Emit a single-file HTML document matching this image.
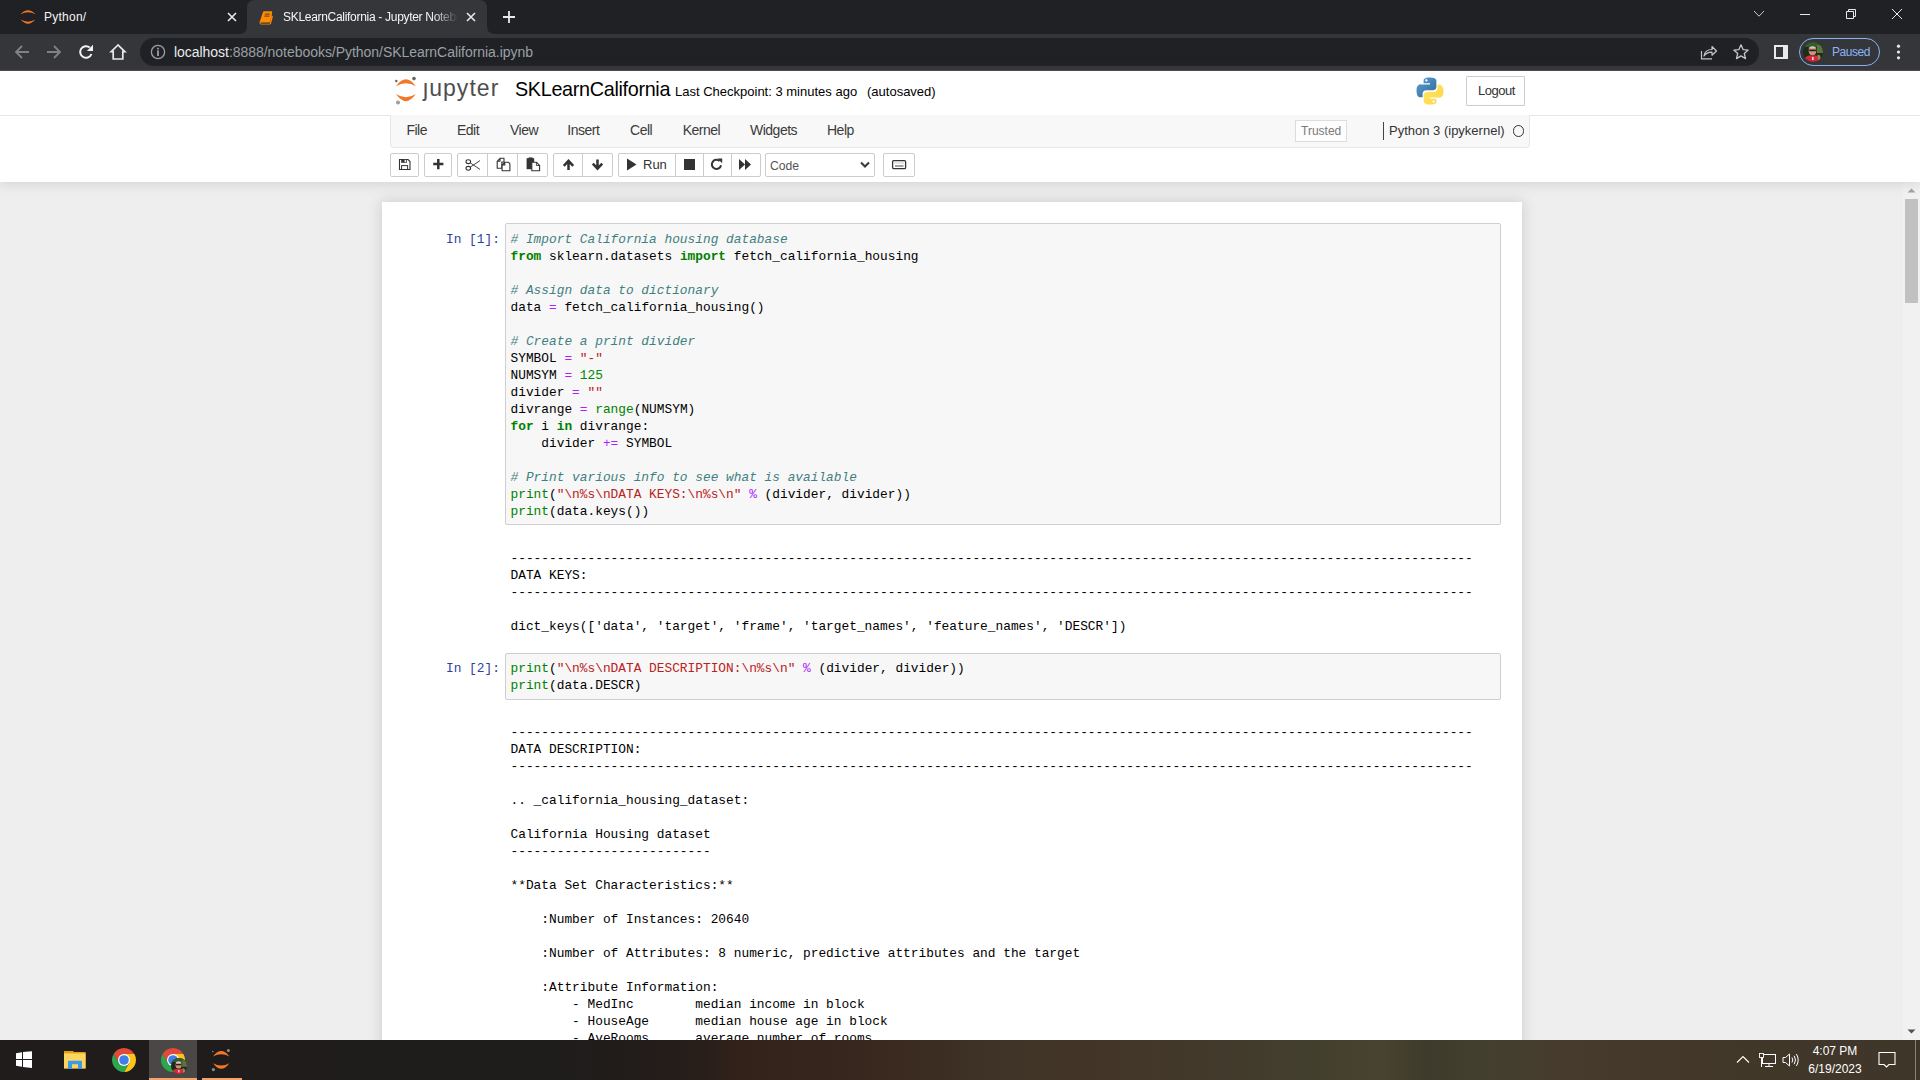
<!DOCTYPE html><html><head><meta charset="utf-8"><title>SKLearnCalifornia - Jupyter Notebook</title><style>
*{box-sizing:border-box}
html,body{margin:0;padding:0;width:1920px;height:1080px;overflow:hidden;position:relative;font-family:"Liberation Sans",sans-serif;background:#fff}
.a{position:absolute;margin:0}
div.a{white-space:nowrap}
.btn{background:#fff;border:1px solid #ccc;border-radius:2px}
pre.mono{font-family:"Liberation Mono",monospace;font-size:12.83px;line-height:17px;color:#000;z-index:2;margin:0;padding:0;white-space:pre}
pre.prompt{color:#303f9f}
.k{color:#008000;font-weight:bold}
.o{color:#aa22ff}
.c{color:#408080;font-style:italic}
.s{color:#ba2121}
.n{color:#080}
.b{color:#008000}
</style></head><body>
<div class="a" style="left:0;top:0;width:1920px;height:34px;background:#202124"></div>
<svg class="a" style="left:239px;top:0" width="256" height="34" viewBox="0 0 256 34">
<path d="M0 34 Q8 34 8 26 L8 8 Q8 0 16 0 L240 0 Q248 0 248 8 L248 26 Q248 34 256 34 Z" fill="#35363a"/></svg>
<svg class="a" style="left:19px;top:8px" width="18" height="18" viewBox="0 0 18 18">
<path d="M1.5 6.3 Q9 -2 16.5 6.3 Q9 2.2 1.5 6.3 Z" fill="#f37726"/>
<path d="M1.5 11.6 Q9 19.9 16.5 11.6 Q9 15.7 1.5 11.6 Z" fill="#f37726"/></svg>
<div class="a" style="left:44px;top:9.5px;color:#f4f5f6;font-size:12px;letter-spacing:0.25px">Python/</div>
<svg class="a" style="left:226px;top:11px" width="12" height="12" viewBox="0 0 12 12"><path d="M2 2 L10 10 M10 2 L2 10" stroke="#e8eaed" stroke-width="1.6"/></svg>
<svg class="a" style="left:259px;top:10.5px" width="15" height="14" viewBox="0 0 15 14">
<path d="M4 1 Q4.3 0.3 5.2 0.3 L12.6 0.3 Q13.4 0.3 13.2 1.2 L11.3 10.6 Q11.1 11.4 10.3 11.4 L2.2 11.4 Q1.2 11.4 1.4 12.2 Q1.6 12.7 2.4 12.7 L10.6 12.7 L11.6 10 L12.6 4.6 Q14.2 4.8 13.8 6.2 L12 12.6 Q11.6 13.6 10.6 13.6 L2.3 13.6 Q0.2 13.6 0.5 11.6 Z" fill="#ff8c00"/>
<path d="M5.8 3.1 H10.8 M5.4 5.1 H10.4" stroke="#35363a" stroke-width="0.9"/></svg>
<div class="a" style="left:283px;top:9.5px;width:175px;height:18px;overflow:hidden;color:#f4f5f6;font-size:12px;letter-spacing:-0.3px;white-space:nowrap;-webkit-mask-image:linear-gradient(90deg,#000 150px,transparent 175px)">SKLearnCalifornia - Jupyter Notebook</div>
<svg class="a" style="left:465px;top:11px" width="12" height="12" viewBox="0 0 12 12"><path d="M2 2 L10 10 M10 2 L2 10" stroke="#e8eaed" stroke-width="1.6"/></svg>
<svg class="a" style="left:502px;top:10px" width="14" height="14" viewBox="0 0 14 14"><path d="M7 1 V13 M1 7 H13" stroke="#e8eaed" stroke-width="1.8"/></svg>
<svg class="a" style="left:1753px;top:10px" width="12" height="8" viewBox="0 0 12 8"><path d="M1 1 L6 6.2 L11 1" stroke="#c9cacc" stroke-width="1" fill="none"/></svg>
<div class="a" style="left:1800px;top:14px;width:10px;height:1px;background:#e8eaed"></div>
<svg class="a" style="left:1845px;top:8px" width="12" height="12" viewBox="0 0 12 12"><path d="M1.5 3.5 H8.5 V10.5 H1.5 Z M3.5 3.5 V1.5 H10.5 V8.5 H8.5" stroke="#e8eaed" stroke-width="1" fill="none"/></svg>
<svg class="a" style="left:1891px;top:8px" width="12" height="12" viewBox="0 0 12 12"><path d="M1 1 L11 11 M11 1 L1 11" stroke="#e8eaed" stroke-width="1"/></svg>
<div class="a" style="left:0;top:34px;width:1920px;height:37px;background:#35363a"></div><div class="a" style="left:0;top:70px;width:1920px;height:1px;background:#4a4b4e"></div>
<svg class="a" style="left:13px;top:44px" width="18" height="16" viewBox="0 0 18 16"><path d="M16 8 H3 M9 2 L3 8 L9 14" stroke="#7f8184" stroke-width="1.8" fill="none"/></svg>
<svg class="a" style="left:45px;top:44px" width="18" height="16" viewBox="0 0 18 16"><path d="M2 8 H15 M9 2 L15 8 L9 14" stroke="#7f8184" stroke-width="1.8" fill="none"/></svg>
<svg class="a" style="left:77px;top:43px" width="18" height="18" viewBox="0 0 18 18"><path d="M14.45 10.98 A5.8 5.8 0 1 1 12.73 4.56" stroke="#f1f3f4" stroke-width="2" fill="none"/><path d="M16 1.8 L16 7.9 L9.9 7.9 Z" fill="#f1f3f4"/></svg>
<svg class="a" style="left:109px;top:43px" width="18" height="18" viewBox="0 0 18 18"><path d="M9 2 L2.2 8.6 H4.2 V16 H13.8 V8.6 H15.8 Z" stroke="#e8eaed" stroke-width="1.7" fill="none" stroke-linejoin="miter"/></svg>
<div class="a" style="left:140px;top:38px;width:1619px;height:28px;border-radius:14px;background:#202124"></div>
<svg class="a" style="left:150px;top:44px" width="16" height="16" viewBox="0 0 16 16"><circle cx="8" cy="8" r="6.6" stroke="#9aa0a6" stroke-width="1.3" fill="none"/><rect x="7.1" y="3.8" width="1.8" height="1.6" fill="#9aa0a6"/><rect x="7.1" y="6.4" width="1.8" height="5.6" fill="#9aa0a6"/></svg>
<div class="a" style="left:174px;top:44px;font-size:14px;letter-spacing:-0.04px;white-space:nowrap;color:#9aa0a6"><span style="color:#e8eaed">localhost</span>:8888/notebooks/Python/SKLearnCalifornia.ipynb</div>
<svg class="a" style="left:1700px;top:44px" width="18" height="16" viewBox="0 0 18 16"><path d="M1.5 7 V14.8 H12" stroke="#c4c7c5" stroke-width="1.2" fill="none"/><path d="M4 12 Q5 5.5 12 5.5 V2.5 L16.5 7 L12 11.2 V8.2 Q7 8 4 12 Z" stroke="#c4c7c5" stroke-width="1.2" fill="none" stroke-linejoin="round"/></svg>
<svg class="a" style="left:1732px;top:43px" width="18" height="18" viewBox="0 0 18 18"><path d="M9 1.8 L11.1 6.6 L16.2 7.1 L12.3 10.5 L13.5 15.6 L9 12.9 L4.5 15.6 L5.7 10.5 L1.8 7.1 L6.9 6.6 Z" stroke="#c4c7c5" stroke-width="1.3" fill="none" stroke-linejoin="round"/></svg>
<div class="a" style="left:1774px;top:45px;width:14px;height:14px;background:#e8eaed"></div><div class="a" style="left:1776px;top:47px;width:7px;height:10px;background:#35363a"></div>
<div class="a" style="left:1799px;top:38px;width:81px;height:28px;border-radius:14px;border:1px solid #8ab4f8;background:#35363a"></div>
<svg class="a" style="left:1803px;top:42px" width="20" height="20" viewBox="0 0 20 20">
<defs><clipPath id="cp1803"><circle cx="10" cy="10" r="10"/></clipPath></defs>
<g clip-path="url(#cp1803)"><rect width="20" height="20" fill="#1f2b19"/><rect x="0" y="0" width="20" height="5" fill="#3b5a2a"/><rect x="14" y="3" width="6" height="8" fill="#58773c"/>
<ellipse cx="9.5" cy="8.8" rx="3.8" ry="4.4" fill="#c8967a"/><path d="M5.3 6.2 Q9.5 2.5 13.7 6.2 Z" fill="#c9c9c9"/>
<rect x="6.3" y="7.6" width="6.6" height="1.6" fill="#1a1a1a"/>
<path d="M0.5 20 Q1.5 12.6 9.5 13.4 Q17.5 12.6 19.5 20 Z" fill="#d42a3a"/><path d="M14.5 12.6 L17.2 13.6 L18 20 L15.2 20 Z" fill="#9c8758"/><rect x="9" y="15" width="1.6" height="3" fill="#f0e0e0"/></g></svg>
<div class="a" style="left:1832px;top:45px;font-size:12px;letter-spacing:-0.45px;color:#8ab4f8;white-space:nowrap">Paused</div>
<svg class="a" style="left:1895px;top:44px" width="7" height="16" viewBox="0 0 7 16"><circle cx="3.5" cy="2.2" r="1.6" fill="#e8eaed"/><circle cx="3.5" cy="8" r="1.6" fill="#e8eaed"/><circle cx="3.5" cy="13.8" r="1.6" fill="#e8eaed"/></svg>
<div class="a" style="left:0;top:71px;width:1920px;height:111px;background:#fff;box-shadow:0 0 12px 1px rgba(87,87,87,0.2);z-index:2"></div>
<svg class="a" style="left:390px;top:72px;z-index:3;" width="32" height="36" viewBox="0 0 32 36">
<path d="M6 14.2 Q15.9 0.4 25.8 14.2 Q15.9 8.2 6 14.2 Z" fill="#f37726"/>
<path d="M6 22.1 Q15.9 36.4 25.8 22.1 Q15.9 28.6 6 22.1 Z" fill="#f37726"/>
<circle cx="24" cy="6.6" r="1.8" fill="#616262"/><circle cx="6.3" cy="9" r="1.2" fill="#616262"/><circle cx="8" cy="30.5" r="2" fill="#9e9e9e"/></svg>
<div class="a" style="left:423px;top:74.5px;font-size:23px;letter-spacing:1.05px;color:#4e4e4e;z-index:3;">ȷupyter</div>
<div class="a" style="left:515px;top:77.5px;font-size:19.8px;letter-spacing:-0.32px;color:#000;white-space:nowrap;z-index:3;">SKLearnCalifornia</div>
<div class="a" style="left:675px;top:84px;font-size:13px;color:#000;white-space:nowrap;z-index:3;">Last Checkpoint: 3 minutes ago</div>
<div class="a" style="left:867px;top:84px;font-size:13px;color:#000;white-space:nowrap;z-index:3;">(autosaved)</div>
<svg class="a" style="left:1416px;top:77px;z-index:3;" width="28" height="28" viewBox="0 0 110 110">
<defs><linearGradient id="pyb" x1="0" y1="0" x2="1" y2="1"><stop offset="0" stop-color="#5a9fd4"/><stop offset="1" stop-color="#306998"/></linearGradient>
<linearGradient id="pyy" x1="0" y1="0" x2="1" y2="1"><stop offset="0" stop-color="#ffe873"/><stop offset="1" stop-color="#ffd43b"/></linearGradient></defs>
<path d="M54 2 C28 2 30 13 30 13 L30 25 L55 25 L55 29 L19 29 C19 29 2 27 2 54 C2 81 17 80 17 80 L26 80 L26 67 C26 67 25 52 41 52 L66 52 C66 52 80 52 80 38 L80 15 C80 15 82 2 54 2 Z M41 9 C43.5 9 45.5 11 45.5 13.5 C45.5 16 43.5 18 41 18 C38.5 18 36.5 16 36.5 13.5 C36.5 11 38.5 9 41 9 Z" fill="url(#pyb)"/>
<path d="M56 108 C82 108 80 97 80 97 L80 85 L55 85 L55 81 L91 81 C91 81 108 83 108 56 C108 29 93 30 93 30 L84 30 L84 43 C84 43 85 58 69 58 L44 58 C44 58 30 58 30 72 L30 95 C30 95 28 108 56 108 Z M69 101 C66.5 101 64.5 99 64.5 96.5 C64.5 94 66.5 92 69 92 C71.5 92 73.5 94 73.5 96.5 C73.5 99 71.5 101 69 101 Z" fill="url(#pyy)"/></svg>
<div class="a btn" style="left:1466px;top:76px;width:59px;height:30px;border-radius:1px;z-index:3;"></div>
<div class="a" style="left:1478px;top:83px;font-size:13px;letter-spacing:-0.5px;color:#333;z-index:3;">Logout</div>
<div class="a" style="left:0;top:115px;width:1920px;height:1px;background:#e7e7e7;z-index:3;"></div>
<div class="a" style="left:390px;top:115px;width:1140px;height:33px;background:#f8f8f8;border:1px solid #e7e7e7;border-top:none;border-radius:0 0 4px 4px;z-index:3;"></div>
<div class="a" style="left:406.4px;top:122px;font-size:14px;letter-spacing:-0.5px;color:#3b3b3b;z-index:3;">File</div>
<div class="a" style="left:457px;top:122px;font-size:14px;letter-spacing:-0.5px;color:#3b3b3b;z-index:3;">Edit</div>
<div class="a" style="left:510px;top:122px;font-size:14px;letter-spacing:-0.5px;color:#3b3b3b;z-index:3;">View</div>
<div class="a" style="left:567.3px;top:122px;font-size:14px;letter-spacing:-0.5px;color:#3b3b3b;z-index:3;">Insert</div>
<div class="a" style="left:630.1px;top:122px;font-size:14px;letter-spacing:-0.5px;color:#3b3b3b;z-index:3;">Cell</div>
<div class="a" style="left:682.7px;top:122px;font-size:14px;letter-spacing:-0.5px;color:#3b3b3b;z-index:3;">Kernel</div>
<div class="a" style="left:750px;top:122px;font-size:14px;letter-spacing:-0.5px;color:#3b3b3b;z-index:3;">Widgets</div>
<div class="a" style="left:827px;top:122px;font-size:14px;letter-spacing:-0.5px;color:#3b3b3b;z-index:3;">Help</div>
<div class="a" style="left:1295px;top:120px;width:52px;height:22px;border:1px solid #ddd;border-radius:0;background:#fdfdfd;z-index:3;"></div>
<div class="a" style="left:1301px;top:124px;font-size:12px;color:#7a7a7a;z-index:3;">Trusted</div>
<div class="a" style="left:1383px;top:122px;width:1px;height:18px;background:#444;z-index:3;"></div>
<div class="a" style="left:1389px;top:123px;font-size:13px;color:#333;white-space:nowrap;z-index:3;">Python 3 (ipykernel)</div>
<div class="a" style="left:1512.5px;top:125px;width:11.5px;height:11.5px;border:1.9px solid #333;border-radius:50%;z-index:3;"></div>
<div class="a btn" style="left:390px;top:153px;width:29px;height:24px;z-index:3;"></div>
<div class="a btn" style="left:424px;top:153px;width:28px;height:24px;z-index:3;"></div>
<div class="a btn" style="left:457px;top:153px;width:91px;height:24px;z-index:3;"></div>
<div class="a" style="left:487px;top:153px;width:1px;height:24px;background:#ccc;z-index:3;"></div>
<div class="a" style="left:517px;top:153px;width:1px;height:24px;background:#ccc;z-index:3;"></div>
<div class="a btn" style="left:553px;top:153px;width:60px;height:24px;z-index:3;"></div>
<div class="a" style="left:582px;top:153px;width:1px;height:24px;background:#ccc;z-index:3;"></div>
<div class="a btn" style="left:618px;top:153px;width:143px;height:24px;z-index:3;"></div>
<div class="a" style="left:675px;top:153px;width:1px;height:24px;background:#ccc;z-index:3;"></div>
<div class="a" style="left:703px;top:153px;width:1px;height:24px;background:#ccc;z-index:3;"></div>
<div class="a" style="left:731px;top:153px;width:1px;height:24px;background:#ccc;z-index:3;"></div>
<div class="a btn" style="left:765px;top:153px;width:110px;height:24px;z-index:3;"></div>
<div class="a" style="left:770px;top:158.5px;font-size:12.2px;color:#555;z-index:3;">Code</div>
<svg class="a" style="left:860px;top:161px;z-index:3;" width="10" height="8" viewBox="0 0 10 8"><path d="M1 1.6 L5 5.6 L9 1.6" stroke="#3a3a3a" stroke-width="2.1" fill="none"/></svg>
<div class="a btn" style="left:883px;top:153px;width:32px;height:24px;z-index:3;"></div>
<svg class="a" style="left:398px;top:158px;z-index:3;" width="13" height="13" viewBox="0 0 13 13"><path d="M1.5 1.5 H10 L12 3.5 V11.5 H1.5 Z" fill="none" stroke="#333" stroke-width="1.1"/><rect x="3.2" y="1.2" width="5.6" height="3.6" fill="#333"/><rect x="6.6" y="1.8" width="1.3" height="2.4" fill="#fff"/><rect x="3.6" y="7.6" width="6" height="3.9" fill="none" stroke="#333" stroke-width="1"/></svg>
<svg class="a" style="left:432px;top:158px;z-index:3;" width="12" height="12" viewBox="0 0 12 12"><path d="M6.3 1 V11.2 M1.2 6.1 H11.4" stroke="#333" stroke-width="2.5"/></svg>
<svg class="a" style="left:465px;top:159px;z-index:3;" width="16" height="12" viewBox="0 0 16 12"><ellipse cx="3.3" cy="2.7" rx="2.3" ry="1.9" fill="none" stroke="#333" stroke-width="1.1"/><ellipse cx="3.3" cy="9.3" rx="2.3" ry="1.9" fill="none" stroke="#333" stroke-width="1.1"/><path d="M5.2 3.8 L15 10.4 M5.2 8.2 L15 1.6" stroke="#333" stroke-width="0.9"/></svg>
<svg class="a" style="left:496px;top:157px;z-index:3;" width="15" height="15" viewBox="0 0 15 15"><path d="M4 1.3 H8 V5 H5.8 V11.2 H1.2 V4.3 Z M1.2 4.3 H4 V1.3" fill="#fff" stroke="#333" stroke-width="1.1" stroke-linejoin="round"/><path d="M8.8 5.2 H12.4 L13.9 6.8 V13.7 H6.1 V7.9 Z M6.1 7.9 H8.8 V5.2" fill="#fff" stroke="#333" stroke-width="1.1" stroke-linejoin="round"/></svg>
<svg class="a" style="left:526px;top:157px;z-index:3;" width="15" height="15" viewBox="0 0 15 15"><rect x="0.6" y="1.2" width="7.6" height="11" fill="#333"/><rect x="2.6" y="0.4" width="4" height="1.4" fill="#333"/><path d="M5.8 5.3 H10.6 L13.6 8.3 V13.8 H5.8 Z" fill="#fff" stroke="#333" stroke-width="1.1" stroke-linejoin="round"/><path d="M10.4 5.4 V8.5 H13.5" fill="none" stroke="#333" stroke-width="0.9"/></svg>
<svg class="a" style="left:562px;top:159px;z-index:3;" width="13" height="12" viewBox="0 0 13 12"><path d="M6.5 11 V2.8 M1.8 6.8 L6.5 1.8 L11.2 6.8" stroke="#333" stroke-width="2.5" fill="none"/></svg>
<svg class="a" style="left:591px;top:159px;z-index:3;" width="13" height="12" viewBox="0 0 13 12"><path d="M6.5 0.5 V8.7 M1.8 4.7 L6.5 9.7 L11.2 4.7" stroke="#333" stroke-width="2.5" fill="none"/></svg>
<svg class="a" style="left:626px;top:158px;z-index:3;" width="11" height="13" viewBox="0 0 11 13"><path d="M1 0.5 L10.5 6.5 L1 12.5 Z" fill="#333"/></svg>
<div class="a" style="left:643px;top:156.5px;font-size:13px;color:#333;z-index:3;">Run</div>
<div class="a" style="left:683.5px;top:159px;width:11px;height:11px;background:#333;z-index:3;"></div>
<svg class="a" style="left:710px;top:158px;z-index:3;" width="13" height="13" viewBox="0 0 13 13"><path d="M11 7.2 A4.6 4.6 0 1 1 9.6 3" stroke="#333" stroke-width="2" fill="none"/><path d="M7.6 0.6 L12.2 0.6 L12.2 5.2 Z" fill="#333"/></svg>
<svg class="a" style="left:738px;top:158px;z-index:3;" width="14" height="13" viewBox="0 0 14 13"><path d="M1 1 L7 6.5 L1 12 Z M7 1 L13 6.5 L7 12 Z" fill="#333"/></svg>
<svg class="a" style="left:891px;top:159px;z-index:3;" width="16" height="11" viewBox="0 0 16 11"><rect x="1.6" y="1.6" width="13" height="8" rx="1.2" fill="none" stroke="#333" stroke-width="1.3"/><path d="M3.5 4 H13" stroke="#999" stroke-width="1.1" stroke-dasharray="1 1"/><path d="M4 7 H12.5" stroke="#555" stroke-width="1.1"/></svg>
<div class="a" style="left:0;top:182px;width:1920px;height:858px;background:#eee;z-index:0"></div>
<div class="a" style="left:382px;top:202px;width:1140px;height:900px;background:#fff;box-shadow:0 0 12px 1px rgba(87,87,87,0.2);z-index:1"></div>
<div class="a" style="left:505px;top:223px;width:996px;height:302px;background:#f7f7f7;border:1px solid #cfcfcf;border-radius:2px;z-index:1;"></div>
<pre class="a mono prompt" style="left:446px;top:231px">In [1]:</pre>
<pre class="a mono" style="left:510.5px;top:231px">
<span class="c"># Import California housing database</span>
<span class="k">from</span> sklearn.datasets <span class="k">import</span> fetch_california_housing

<span class="c"># Assign data to dictionary</span>
data <span class="o">=</span> fetch_california_housing()

<span class="c"># Create a print divider</span>
SYMBOL <span class="o">=</span> <span class="s">&quot;-&quot;</span>
NUMSYM <span class="o">=</span> <span class="n">125</span>
divider <span class="o">=</span> <span class="s">&quot;&quot;</span>
divrange <span class="o">=</span> <span class="b">range</span>(NUMSYM)
<span class="k">for</span> i <span class="k">in</span> divrange:
    divider <span class="o">+=</span> SYMBOL

<span class="c"># Print various info to see what is available</span>
<span class="b">print</span>(<span class="s">&quot;\n%s\nDATA KEYS:\n%s\n&quot;</span> <span class="o">%</span> (divider, divider))
<span class="b">print</span>(data.keys())</pre>
<pre class="a mono" style="left:510.5px;top:533px">

-----------------------------------------------------------------------------------------------------------------------------
DATA KEYS:
-----------------------------------------------------------------------------------------------------------------------------

dict_keys([&#x27;data&#x27;, &#x27;target&#x27;, &#x27;frame&#x27;, &#x27;target_names&#x27;, &#x27;feature_names&#x27;, &#x27;DESCR&#x27;])</pre>
<div class="a" style="left:505px;top:653px;width:996px;height:47px;background:#f7f7f7;border:1px solid #cfcfcf;border-radius:2px;z-index:1;"></div>
<pre class="a mono prompt" style="left:446px;top:660px">In [2]:</pre>
<pre class="a mono" style="left:510.5px;top:660px">
<span class="b">print</span>(<span class="s">&quot;\n%s\nDATA DESCRIPTION:\n%s\n&quot;</span> <span class="o">%</span> (divider, divider))
<span class="b">print</span>(data.DESCR)</pre>
<pre class="a mono" style="left:510.5px;top:707px">

-----------------------------------------------------------------------------------------------------------------------------
DATA DESCRIPTION:
-----------------------------------------------------------------------------------------------------------------------------

.. _california_housing_dataset:

California Housing dataset
--------------------------

**Data Set Characteristics:**

    :Number of Instances: 20640

    :Number of Attributes: 8 numeric, predictive attributes and the target

    :Attribute Information:
        - MedInc        median income in block
        - HouseAge      median house age in block
        - AveRooms      average number of rooms
        - AveBedrms     average number of bedrooms</pre>
<div class="a" style="left:1903px;top:182px;width:17px;height:858px;background:#f1f1f1;z-index:1"></div>
<div class="a" style="left:1905px;top:199px;width:13px;height:104px;background:#c1c1c1;z-index:1"></div>
<svg class="a" style="left:1906px;top:186px;z-index:1" width="11" height="8" viewBox="0 0 11 8"><path d="M1.5 6.5 L5.5 2.5 L9.5 6.5 Z" fill="#a3a3a3"/></svg>
<svg class="a" style="left:1906px;top:1028px;z-index:1" width="11" height="8" viewBox="0 0 11 8"><path d="M1.5 1.5 L5.5 5.5 L9.5 1.5 Z" fill="#505050"/></svg>
<div class="a" style="left:0;top:1040px;width:1920px;height:40px;background:linear-gradient(90deg,#1f1c1b 0px,#1f1d1c 560px,#221c1a 640px,#281e1a 700px,#33221a 740px,#36251c 820px,#3a2a20 900px,#3f3327 1000px,#433628 1100px,#423a2c 1230px,#433f2e 1300px,#47432f 1380px,#3f3b2c 1430px,#43402f 1490px,#463b2d 1560px,#433829 1650px,#3f362a 1920px);z-index:5"></div>
<svg class="a" style="left:15px;top:1051px;z-index:6;" width="18" height="18" viewBox="0 0 18 18"><path d="M1 2.2 L7 1.3 V8 H1 Z M8 1.1 L17 0.3 V8 H8 Z M1 9 H7 V15.7 L1 14.8 Z M8 9 H17 V16.9 L8 15.9 Z" fill="#fff"/></svg>
<svg class="a" style="left:64px;top:1051px;z-index:6;" width="22" height="19" viewBox="0 0 22 19"><path d="M0 0 H9 L10 1 H21.6 V17.4 H0 Z" fill="#e4a10f"/><path d="M0 2.4 H21.6 V17.4 H0 Z" fill="#fcd462"/><path d="M4 18 V10.6 Q4 9.8 5 9.8 H17 Q18 9.8 18 10.6 V18 H14 V13.2 H8 V18 Z" fill="#3c9be8"/></svg>
<svg class="a" style="left:112px;top:1048px;z-index:6;" width="24" height="24" viewBox="0 0 48 48">
<path d="M24 12 L44.78 12 A24 24 0 0 0 3.22 12 L13.61 30 L24 24 Z" fill="#e04a3a"/>
<path d="M34.39 30 L24 48 A24 24 0 0 0 44.78 12 L24 12 L24 24 Z" fill="#fbc41a"/>
<path d="M13.61 30 L3.22 12 A24 24 0 0 0 24 48 L34.39 30 L24 24 Z" fill="#2ea64c"/>
<circle cx="24" cy="24" r="12" fill="#fff"/><circle cx="24" cy="24" r="9.6" fill="#3f7fe8"/></svg>
<div class="a" style="left:149px;top:1040px;width:48px;height:40px;background:#4a4746;z-index:6;"></div>
<svg class="a" style="left:161px;top:1048px;z-index:7;" width="24" height="24" viewBox="0 0 48 48">
<path d="M24 12 L44.78 12 A24 24 0 0 0 3.22 12 L13.61 30 L24 24 Z" fill="#e04a3a"/>
<path d="M34.39 30 L24 48 A24 24 0 0 0 44.78 12 L24 12 L24 24 Z" fill="#fbc41a"/>
<path d="M13.61 30 L3.22 12 A24 24 0 0 0 24 48 L34.39 30 L24 24 Z" fill="#2ea64c"/>
<circle cx="24" cy="24" r="12" fill="#fff"/><circle cx="24" cy="24" r="9.6" fill="#3f7fe8"/></svg>
<svg class="a" style="z-index:8;left:171px;top:1058px" width="16" height="16" viewBox="0 0 20 20">
<defs><clipPath id="cp171"><circle cx="10" cy="10" r="10"/></clipPath></defs>
<g clip-path="url(#cp171)"><rect width="20" height="20" fill="#1f2b19"/><rect x="0" y="0" width="20" height="5" fill="#3b5a2a"/><rect x="14" y="3" width="6" height="8" fill="#58773c"/>
<ellipse cx="9.5" cy="8.8" rx="3.8" ry="4.4" fill="#c8967a"/><path d="M5.3 6.2 Q9.5 2.5 13.7 6.2 Z" fill="#c9c9c9"/>
<rect x="6.3" y="7.6" width="6.6" height="1.6" fill="#1a1a1a"/>
<path d="M0.5 20 Q1.5 12.6 9.5 13.4 Q17.5 12.6 19.5 20 Z" fill="#d42a3a"/><path d="M14.5 12.6 L17.2 13.6 L18 20 L15.2 20 Z" fill="#9c8758"/><rect x="9" y="15" width="1.6" height="3" fill="#f0e0e0"/></g></svg>
<div class="a" style="left:149px;top:1078px;width:48px;height:2px;background:#f5a36c;z-index:7"></div>
<svg class="a" style="left:208px;top:1047px;z-index:6;" width="26" height="26" viewBox="0 0 26 26">
<path d="M5 9.4 Q13.2 -1.4 21.4 9.4 Q13.2 5.2 5 9.4 Z" fill="#f37726"/>
<path d="M5 16.2 Q13.2 27.2 21.4 16.2 Q13.2 20.6 5 16.2 Z" fill="#f37726"/>
<circle cx="20.4" cy="3.6" r="1.5" fill="#8c8c8c"/><circle cx="5.4" cy="22.6" r="1.6" fill="#8c8c8c"/><circle cx="4.8" cy="4.6" r="0.8" fill="#8c8c8c"/></svg>
<div class="a" style="left:202px;top:1078px;width:40px;height:2px;background:#f5a36c;z-index:6;"></div>
<svg class="a" style="left:1736px;top:1055px;z-index:6;" width="14" height="9" viewBox="0 0 14 9"><path d="M1 7.5 L7 1.5 L13 7.5" stroke="#fff" stroke-width="1.1" fill="none"/></svg>
<svg class="a" style="left:1759px;top:1053px;z-index:6;" width="18" height="15" viewBox="0 0 18 15"><rect x="3.5" y="1.5" width="13" height="9" fill="none" stroke="#fff" stroke-width="1"/><path d="M10 10.5 V13.5 M6 13.5 H14" stroke="#fff" stroke-width="1"/><rect x="0.5" y="0.5" width="4" height="4" fill="#3a3128" stroke="#fff" stroke-width="0.9"/><path d="M2.5 4.5 V14" stroke="#fff" stroke-width="1"/></svg>
<svg class="a" style="left:1782px;top:1052px;z-index:6;" width="18" height="16" viewBox="0 0 18 16"><path d="M1 5.5 H3.5 L7.5 2 V14 L3.5 10.5 H1 Z" fill="none" stroke="#fff" stroke-width="1"/><path d="M10 5.5 Q11.5 8 10 10.5 M12.2 3.8 Q14.8 8 12.2 12.2 M14.4 2 Q18 8 14.4 14" fill="none" stroke="#fff" stroke-width="1"/></svg>
<div class="a" style="left:1810px;top:1044px;width:50px;text-align:center;font-size:12px;color:#fff;z-index:6;">4:07 PM</div>
<div class="a" style="left:1804px;top:1062px;width:62px;text-align:center;font-size:12px;color:#fff;z-index:6;">6/19/2023</div>
<svg class="a" style="left:1878px;top:1051px;z-index:6;" width="18" height="18" viewBox="0 0 18 18"><path d="M1 1.5 H17 V13.5 H11 L8.5 16 L6 13.5 H1 Z" fill="none" stroke="#fff" stroke-width="1.1"/></svg>
<div class="a" style="left:1915px;top:1040px;width:1px;height:40px;background:#8a8178;z-index:6;"></div>
</body></html>
